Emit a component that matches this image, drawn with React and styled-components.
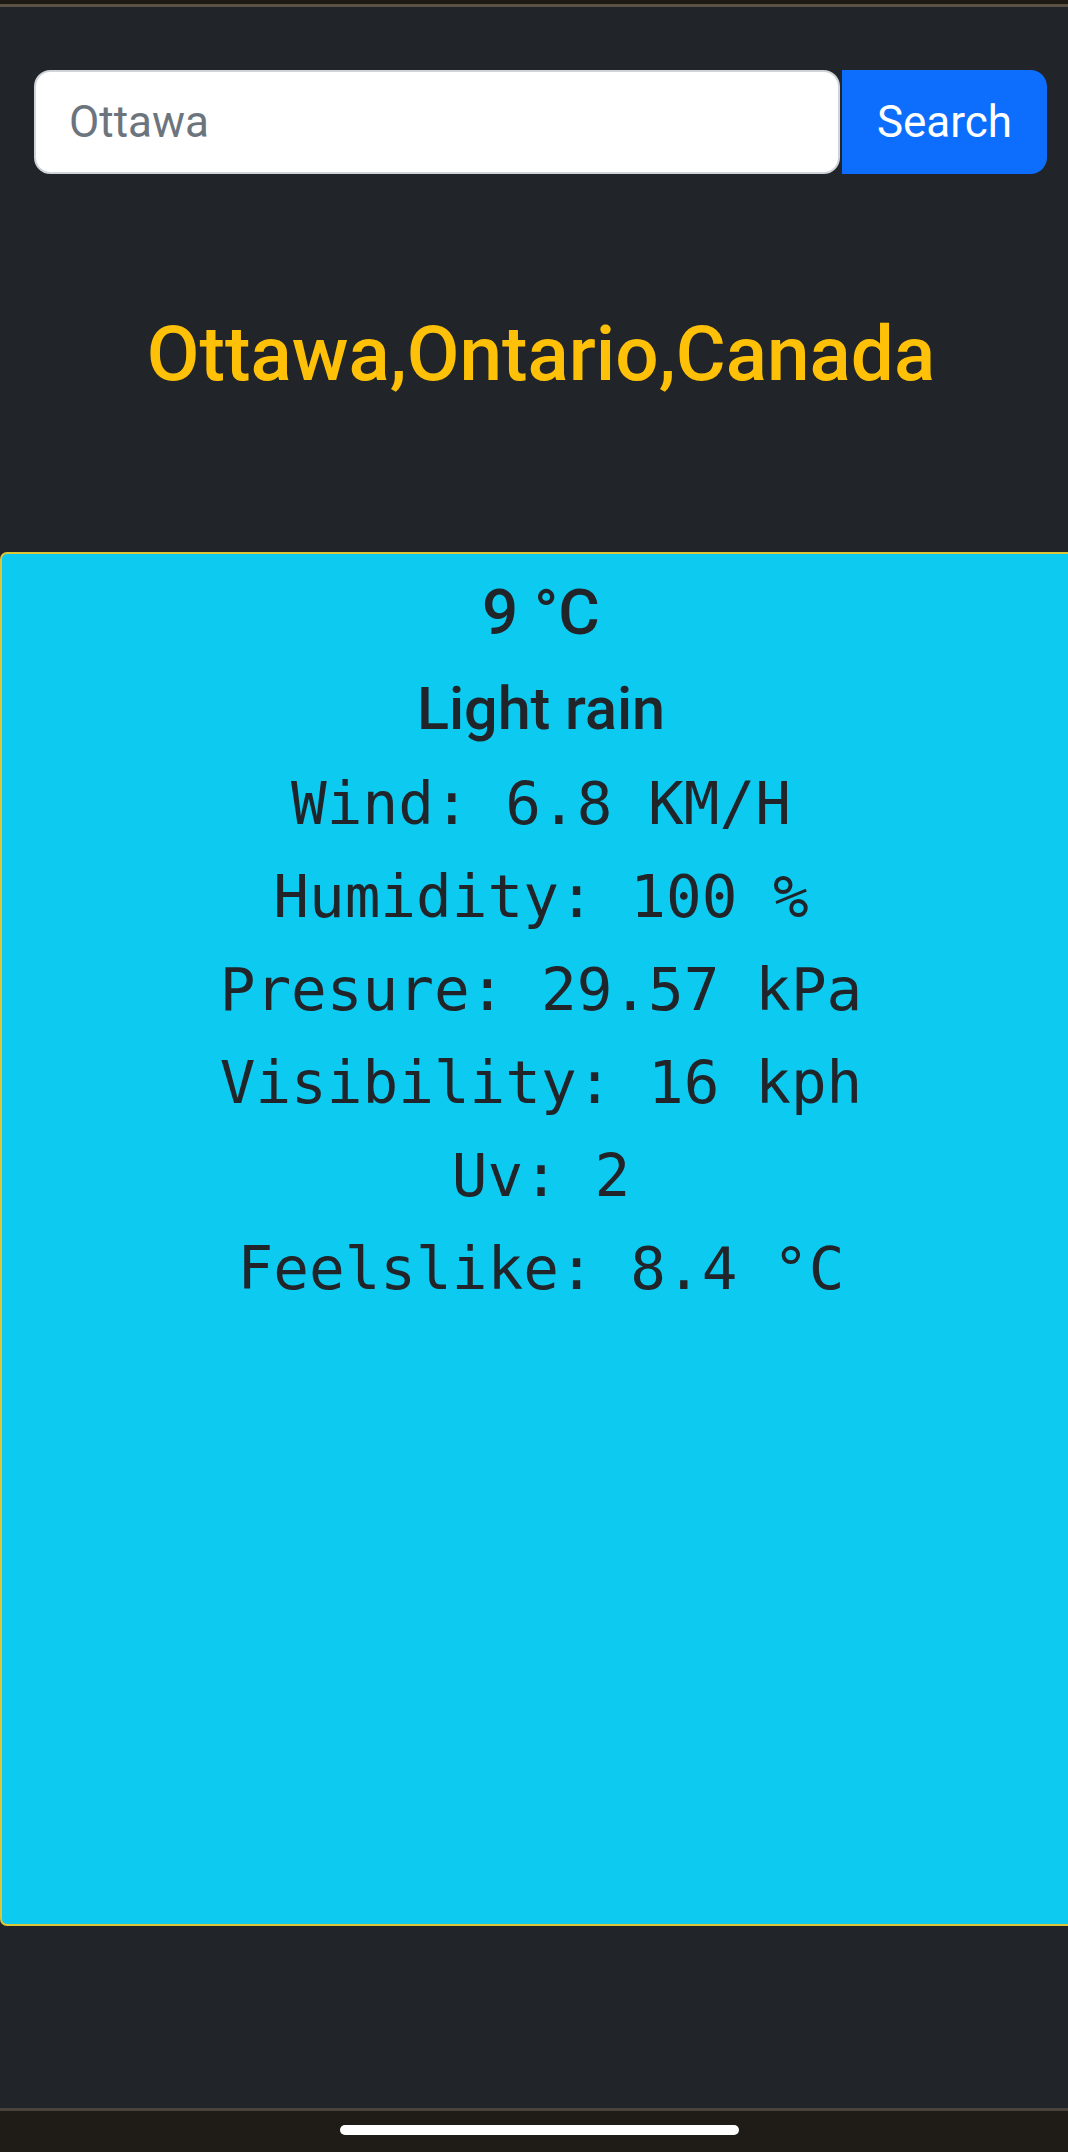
import React from "react";
import styled, { createGlobalStyle } from "styled-components";

const Global = createGlobalStyle`
  html, body {
    margin: 0;
    padding: 0;
    background: #212529;
    overflow: hidden;
  }
  * { box-sizing: border-box; }
`;

const Screen = styled.div`
  width: 1082px;
  min-height: 2152px;
  display: flex;
  flex-direction: column;
  background: #212529;
  font-family: Roboto, "Noto Sans", sans-serif;
`;

const StatusBar = styled.div`
  height: 7px;
  background: #1d1a15;
  border-bottom: 3px solid #5a5244;
  width: 1068px;
`;

const Main = styled.main`
  flex: 1;
  display: flex;
  flex-direction: column;
  padding-top: 63px;
`;

const SearchRow = styled.form`
  display: flex;
  padding: 0 35px 0 34px;
  margin: 0;
`;

const SearchInput = styled.input`
  flex: 1;
  min-width: 0;
  height: 104px;
  padding: 16.5px 33px;
  font-family: Roboto, sans-serif;
  font-size: 44px;
  line-height: 1.5;
  color: #212529;
  background: #fff;
  border: 2.75px solid #ced4da;
  border-radius: 16.5px;
  outline: none;
  margin-right: 2px;
  &::placeholder { color: #6c757d; }
`;

const SearchButton = styled.button`
  width: 205px;
  height: 104px;
  padding: 16.5px 33px;
  font-family: Roboto, sans-serif;
  font-size: 44px;
  line-height: 1.5;
  color: #fff;
  background: #0d6efd;
  border: none;
  border-radius: 0 16.5px 16.5px 0;
`;

const Title = styled.h1`
  margin: 134px 0 0;
  text-align: center;
  font-family: Roboto, sans-serif;
  font-weight: 500;
  font-size: 76.5px;
  line-height: 92px;
  color: #ffc107;
`;

const Card = styled.section`
  margin-top: 152px;
  height: 1374px;
  background: #0dcaf0;
  border: 2px solid #dcc63a;
  border-radius: 7px;
  padding-top: 21px;
  text-align: center;
  color: #212529;
`;

const Temp = styled.h3`
  margin: 0 0 22px;
  font-family: Roboto, sans-serif;
  font-weight: 500;
  font-size: 63.6px;
  line-height: 76px;
`;

const Condition = styled.h4`
  margin: 0 0 13px;
  font-family: Roboto, sans-serif;
  font-weight: 500;
  font-size: 59.3px;
  line-height: 71px;
`;

const Stat = styled.div`
  font-family: "DejaVu Sans Mono", "Liberation Mono", monospace;
  font-size: 59.3px;
  line-height: 93px;
  white-space: pre;
`;

const NavBar = styled.div`
  width: 1068px;
  height: 44px;
  background: #1f1c18;
  border-top: 3px solid #4a433c;
  display: flex;
  padding: 14px 0 0 340px;
`;

const Pill = styled.div`
  width: 399px;
  height: 10px;
  border-radius: 5px;
  background: #ffffff;
`;

const stats = [
  "Wind: 6.8 KM/H",
  "Humidity: 100 %",
  "Presure: 29.57 kPa",
  "Visibility: 16 kph",
  "Uv: 2",
  "Feelslike: 8.4 °C",
];

export default function App() {
  return (
    <>
      <Global />
      <Screen>
        <StatusBar />
        <Main>
          <SearchRow onSubmit={(e) => e.preventDefault()}>
            <SearchInput placeholder="Ottawa" />
            <SearchButton type="submit">Search</SearchButton>
          </SearchRow>
          <Title>Ottawa,Ontario,Canada</Title>
          <Card>
            <Temp>9 °C</Temp>
            <Condition>Light rain</Condition>
            {stats.map((s) => (
              <Stat key={s}>{s}</Stat>
            ))}
          </Card>
        </Main>
        <NavBar>
          <Pill />
        </NavBar>
      </Screen>
    </>
  );
}
